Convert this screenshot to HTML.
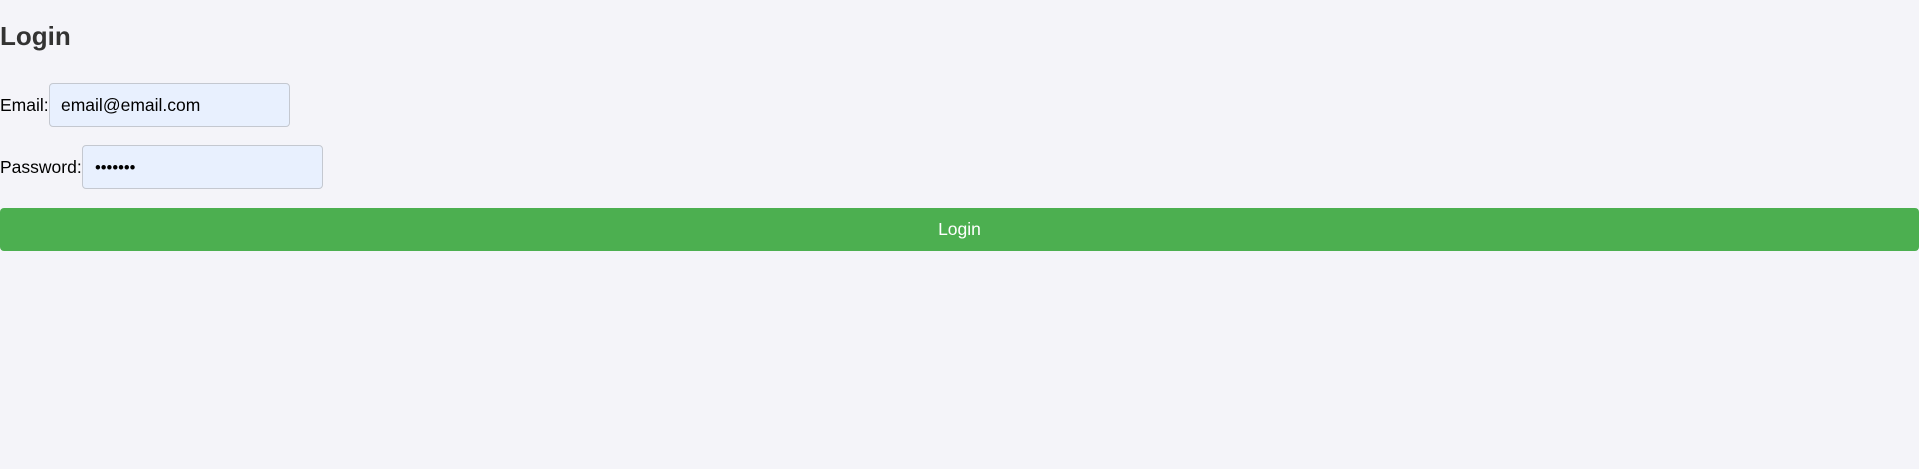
<!DOCTYPE html>
<html><head><style>
body{margin:0;background:#f4f4f9;font-family:"Liberation Sans",Arial,sans-serif;width:1919px;height:469px;overflow:hidden;position:relative;color:#000}
h2{position:absolute;left:0;top:21px;margin:0;font-size:26px;font-weight:bold;color:#333;line-height:30px}
.lbl{position:absolute;left:0;font-size:17.5px;line-height:20px}
.inp{position:absolute;height:42px;width:239px;background:#e8f0fe;border:1px solid #c4c8d0;border-radius:4px;font-size:17.5px;line-height:42px;box-sizing:content-box}
.btn{position:absolute;left:0;top:208px;width:1919px;height:43px;background:#4caf50;border-radius:4px;color:#fff;font-size:17.5px;line-height:43px;text-align:center}
</style></head><body>
<h2>Login</h2>
<div class="lbl" style="top:95px">Email:</div>
<div class="inp" style="left:49px;top:83px"><span style="margin-left:11px">email@email.com</span></div>
<div class="lbl" style="top:157px">Password:</div>
<div class="inp" style="left:82px;top:145px"><span style="margin-left:12px;font-size:16.5px">•••••••</span></div>
<div class="btn">Login</div>
</body></html>
